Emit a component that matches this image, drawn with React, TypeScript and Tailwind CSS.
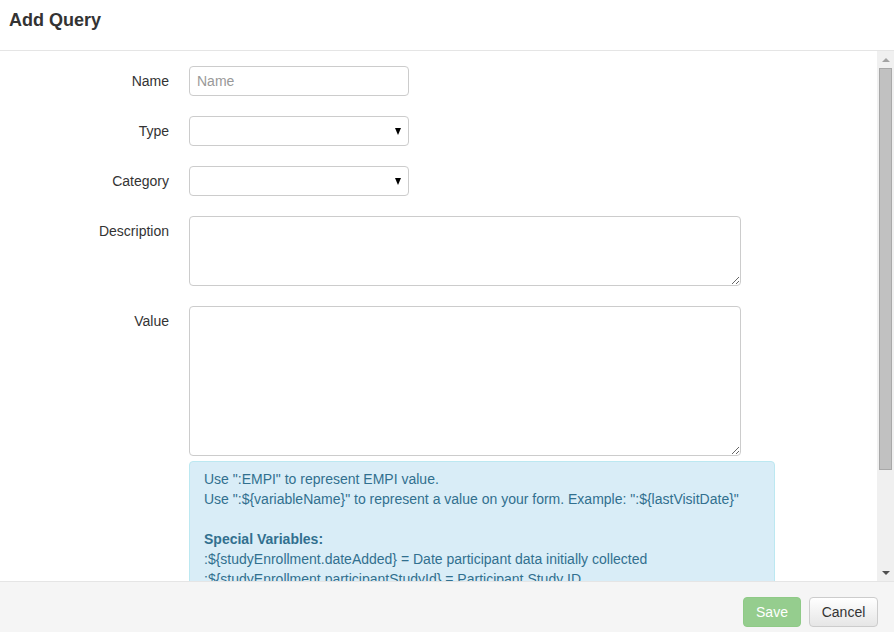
import type { ReactNode } from "react";

const font = { fontFamily: '"Liberation Sans", Arial, sans-serif' };

function Row({ label, children }: { label: string; children: ReactNode }) {
  return (
    <div className="flex items-start">
      <label className="w-[169px] shrink-0 text-right text-[14px] leading-[30px] text-[#333]">
        {label}
      </label>
      <div className="ml-[20px]">{children}</div>
    </div>
  );
}

function Select() {
  return (
    <div className="relative h-[30px] w-[220px] rounded-[4px] border border-[#ccc] bg-white">
      <span className="absolute right-[7px] top-[11px] h-0 w-0 border-x-[3.5px] border-t-[7px] border-x-transparent border-t-black" />
    </div>
  );
}

function Scrollbar() {
  return (
    <div className="flex w-[17px] shrink-0 flex-col bg-[#f0f0f0]">
      <div className="flex h-[17px] items-center justify-center">
        <span className="h-0 w-0 border-x-[4px] border-b-[4px] border-x-transparent border-b-[#a3a3a3]" />
      </div>
      <div className="mx-[2px] h-[402px] border border-[#a8a8a8] bg-[#c1c1c1]" />
      <div className="flex-1" />
      <div className="flex h-[17px] items-center justify-center">
        <span className="h-0 w-0 border-x-[4px] border-t-[4px] border-x-transparent border-t-[#505050]" />
      </div>
    </div>
  );
}

export default function App() {
  return (
    <div className="flex h-[632px] w-[894px] flex-col overflow-hidden bg-white" style={font}>
      <div className="h-[51px] shrink-0 border-b border-[#e5e5e5] pl-[9px] pt-[9px]">
        <h4 className="text-[18px] font-bold leading-[22px] text-[#333]">Add Query</h4>
      </div>

      <div className="flex h-[530px] shrink-0">
        <div className="flex-1 overflow-hidden">
          <div className="flex flex-col gap-[20px] pt-[15px]">
            <Row label="Name">
              <input
                placeholder="Name"
                className="h-[30px] w-[220px] rounded-[4px] border border-[#ccc] px-[7px] text-[14px] text-[#555] outline-none placeholder:text-[#999]"
              />
            </Row>
            <Row label="Type">
              <Select />
            </Row>
            <Row label="Category">
              <Select />
            </Row>
            <Row label="Description">
              <textarea className="block h-[70px] w-[552px] resize-y rounded-[4px] border border-[#ccc] outline-none" />
            </Row>
            <div>
              <Row label="Value">
                <textarea className="block h-[150px] w-[552px] resize-y rounded-[4px] border border-[#ccc] outline-none" />
              </Row>
              <div className="ml-[189px] mt-[5px] w-[586px] rounded-[4px] border border-[#bce8f1] bg-[#d9edf7] px-[14px] py-[7px] text-[14px] leading-[20px] text-[#31708f]">
                <div>Use ":EMPI" to represent EMPI value.</div>
                <div>Use ":${"{variableName}"}" to represent a value on your form. Example: ":${"{lastVisitDate}"}"</div>
                <div className="h-[20px]" />
                <div className="font-bold">Special Variables:</div>
                <div>:${"{studyEnrollment.dateAdded}"} = Date participant data initially collected</div>
                <div>:${"{studyEnrollment.participantStudyId}"} = Participant Study ID</div>
                <div>:${"{studyEnrollment.studyId}"} = Study ID</div>
              </div>
            </div>
          </div>
        </div>
        <Scrollbar />
      </div>

      <div className="flex flex-1 items-start justify-end gap-[8px] border-t border-[#e5e5e5] bg-[#f5f5f5] pr-[16px] pt-[15px]">
        <button className="h-[30px] w-[58px] rounded-[4px] border border-[#8fca87] bg-[#95cd8e] text-[14px] text-white">
          Save
        </button>
        <button className="h-[30px] w-[69px] rounded-[4px] border border-[#ccc] bg-gradient-to-b from-white to-[#e6e6e6] text-[14px] text-[#333]">
          Cancel
        </button>
      </div>
    </div>
  );
}
